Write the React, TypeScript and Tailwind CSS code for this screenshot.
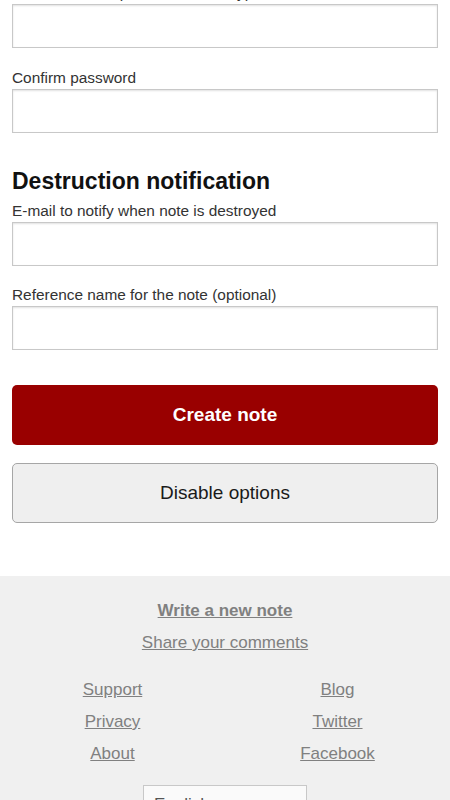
import React from 'react';

const FIELD_INPUT =
  'mt-px block h-11 w-full border border-[#c8c8c8] bg-white px-2 text-[15px] shadow-[inset_0_1px_2px_rgba(0,0,0,0.12)] outline-none';

const Field: React.FC<{ label: string; type?: string; className?: string }> = ({ label, type = 'text', className = '' }) => (
  <div className={className}>
    <label className="block text-[15.4px] leading-5 text-[#333]">{label}</label>
    <input type={type} className={FIELD_INPUT} />
  </div>
);

const App: React.FC = () => {
  return (
    <div className="min-h-screen bg-white font-['Liberation_Sans',Arial,sans-serif]">
      <div className="-mt-[17px] px-3">
        <Field label="Enter a custom password to encrypt the note" type="password" />
        <Field label="Confirm password" type="password" className="mt-5" />

        <h2 className="mt-[35px] text-[23px] font-bold leading-[26px] text-[#111]">Destruction notification</h2>
        <Field label="E-mail to notify when note is destroyed" type="email" className="mt-[7px]" />
        <Field label="Reference name for the note (optional)" className="mt-[19px]" />

        <button className="mt-[35px] block h-[60px] w-full rounded-[5px] bg-[#990000] text-[19px] font-bold text-white">
          Create note
        </button>
        <button className="mt-[18px] block h-[60px] w-full rounded-[5px] border border-[#a6a6a6] bg-[#efefef] text-[19px] text-[#1a1a1a]">
          Disable options
        </button>
      </div>

      <footer className="mt-[53px] bg-[#f0f0f0] pb-10 pt-[19px] text-center text-[17px] leading-8 text-[#808080]">
        <div>
          <a href="#" className="font-bold underline">Write a new note</a>
        </div>
        <div>
          <a href="#" className="underline">Share your comments</a>
        </div>
        <div className="mt-[15px] grid grid-cols-2">
          <a href="#" className="justify-self-center underline">Support</a>
          <a href="#" className="justify-self-center underline">Blog</a>
          <a href="#" className="justify-self-center underline">Privacy</a>
          <a href="#" className="justify-self-center underline">Twitter</a>
          <a href="#" className="justify-self-center underline">About</a>
          <a href="#" className="justify-self-center underline">Facebook</a>
        </div>
        <div className="mt-[15px] flex justify-center">
          <div className="h-10 w-[164px] border border-[#c8c8c8] bg-[#fafafa] px-[10px] text-left text-[17px] leading-[38px] text-[#555]">
            English
          </div>
        </div>
      </footer>
    </div>
  );
};

export default App;
